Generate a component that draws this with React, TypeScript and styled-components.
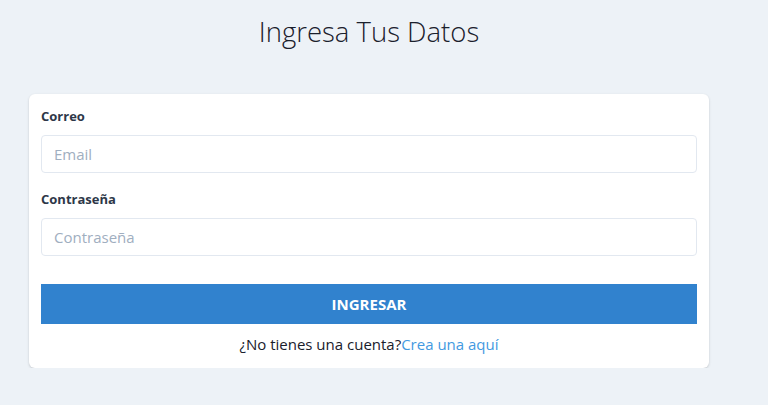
import React from "react";
import styled, { createGlobalStyle } from "styled-components";

const Global = createGlobalStyle`
  html, body { margin: 0; padding: 0; }
  body {
    background: #edf2f7;
    font-family: "Open Sans", "Noto Sans", sans-serif;
    color: #1a202c;
  }
  * { box-sizing: border-box; }
`;

const Page = styled.main`
  width: 680px;
  margin-left: 29px;
  padding-top: 14px;
`;

const Title = styled.h1`
  margin: 0 0 44px;
  text-align: center;
  font-weight: 300;
  font-size: 27.5px;
  line-height: 36px;
  color: #1a202c;
`;

const Card = styled.form`
  background: #fff;
  border-radius: 6px;
  box-shadow: 0 1px 3px rgba(0, 0, 0, 0.12), 0 1px 2px rgba(0, 0, 0, 0.06);
  padding: 12px 12px 13px;
  display: flex;
  flex-direction: column;
`;

const Field = styled.div<{ $last?: boolean }>`
  display: flex;
  flex-direction: column;
  margin-bottom: ${(p) => (p.$last ? "28px" : "16px")};
`;

const Label = styled.label`
  font-size: 13px;
  font-weight: 700;
  line-height: 20px;
  color: #2d3748;
  margin-bottom: 9px;
`;

const Input = styled.input`
  height: 38px;
  width: 100%;
  border: 1px solid #e2e8f0;
  border-radius: 4px;
  padding: 0 12px;
  font-family: inherit;
  font-size: 15px;
  color: #4a5568;
  outline: none;
  &::placeholder { color: #a0aec0; }
`;

const Button = styled.button`
  height: 40px;
  width: 100%;
  border: none;
  background: #3182ce;
  color: #fff;
  font-family: inherit;
  font-weight: 700;
  font-size: 15px;
  text-transform: uppercase;
  cursor: pointer;
`;

const Footer = styled.p`
  margin: 9px 0 0;
  text-align: center;
  font-size: 15px;
  line-height: 22px;
  color: #1a202c;
`;

const Link = styled.a`
  color: #4299e1;
  text-decoration: none;
`;

export default function App() {
  return (
    <>
      <Global />
      <Page>
        <Title>Ingresa Tus Datos</Title>
        <Card onSubmit={(e) => e.preventDefault()}>
          <Field>
            <Label htmlFor="email">Correo</Label>
            <Input id="email" type="email" placeholder="Email" />
          </Field>
          <Field $last>
            <Label htmlFor="password">Contraseña</Label>
            <Input id="password" type="password" placeholder="Contraseña" />
          </Field>
          <Button type="submit">Ingresar</Button>
          <Footer>
            ¿No tienes una cuenta?<Link href="#">Crea una aquí</Link>
          </Footer>
        </Card>
      </Page>
    </>
  );
}
